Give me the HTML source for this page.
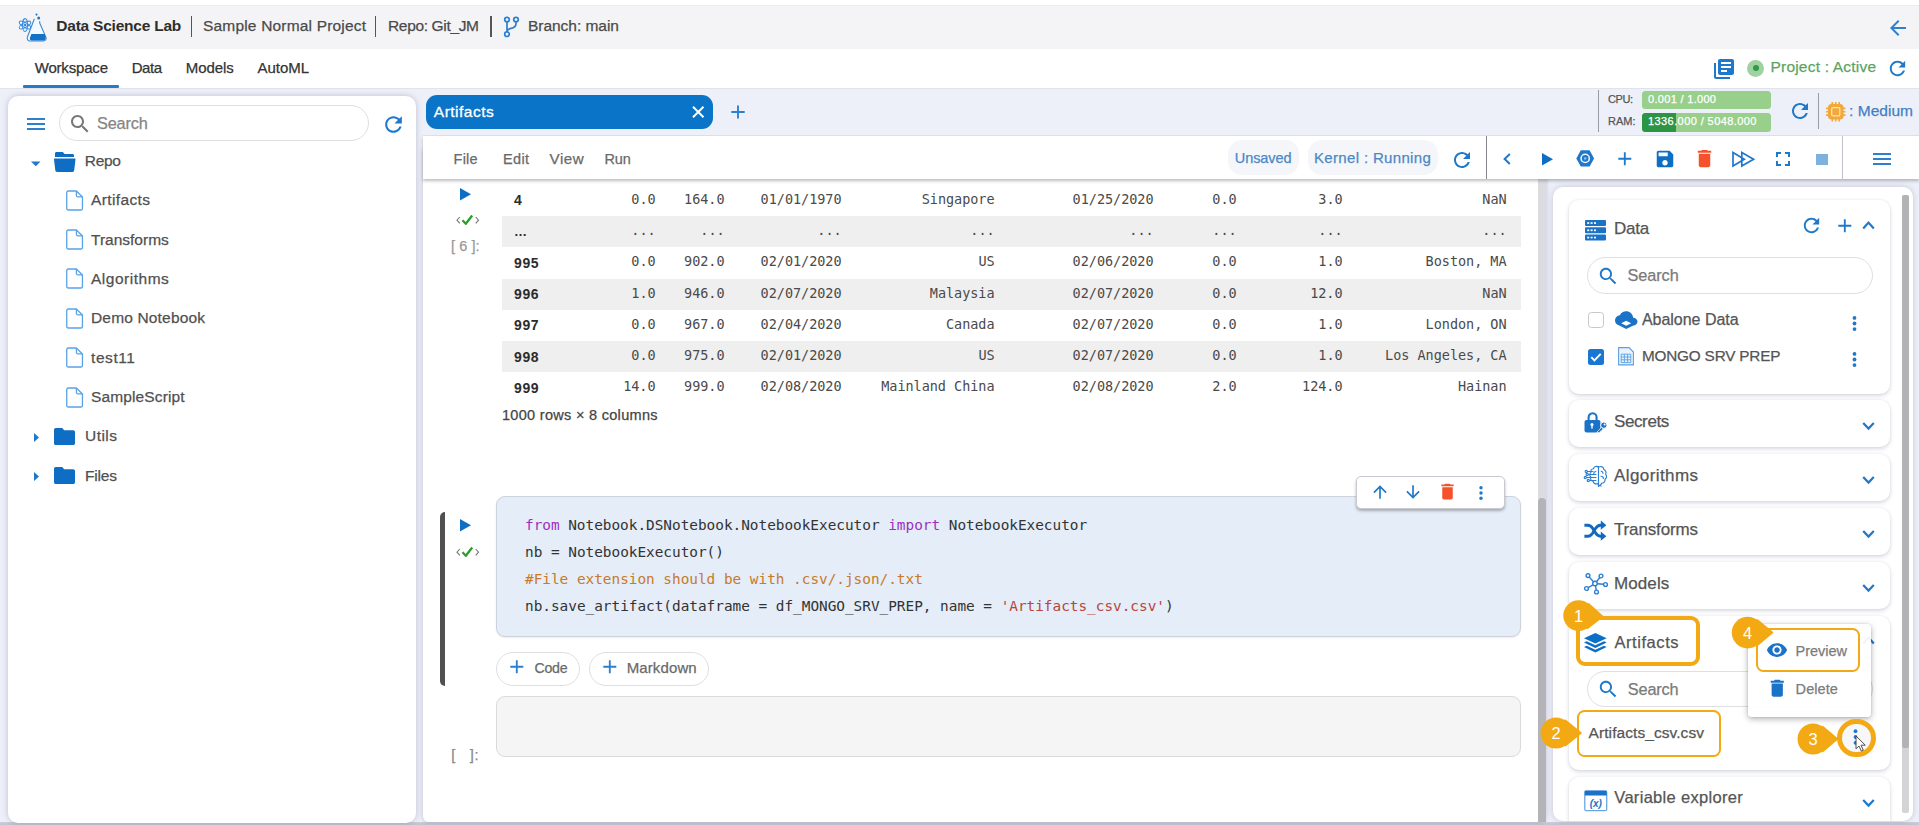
<!DOCTYPE html>
<html lang="en">
<head>
<meta charset="utf-8">
<title>Data Science Lab - Artifacts</title>
<style>
*{box-sizing:border-box;margin:0;padding:0}
html,body{width:1919px;height:825px;overflow:hidden}
body{position:relative;background:#eef0f9;font-family:"Liberation Sans",Arial,sans-serif;color:#444;font-size:15px;line-height:1}
.abs{position:absolute}
.mono,.mono .t{font-family:"DejaVu Sans Mono","Liberation Mono",monospace;-webkit-text-stroke:0}
svg{position:absolute;display:block;overflow:visible}
.ic{fill:#1f78c9}
#hdr{left:0;top:0;width:1919px;height:48.500px;background:#f4f4f6;border-top:5px solid #fff}
#nav{left:0;top:48.500px;width:1919px;height:39.500px;background:#fff}
#left{left:8px;top:96px;width:408px;height:726.800px;background:#fff;border-radius:10px;box-shadow:0 0 6px rgba(70,72,110,.30)}
#tabstrip{left:0;top:88px;width:1919px;height:48px;background:transparent;border-top:1px solid #e1e3ea}
#center{left:423px;top:150px;width:1123px;height:671.600px;background:#fff;border-radius:0 0 6px 6px;box-shadow:0 0 5px rgba(70,72,110,.28)}
#toolbar{left:423px;top:136px;width:1496px;height:43px;background:#fff;box-shadow:0 2px 3px rgba(40,40,50,.30)}
#right{left:1553px;top:186.500px;width:359.500px;height:634.500px;background:#fff;border-radius:10px;box-shadow:0 0 6px rgba(70,72,110,.26)}
.card{position:absolute;left:1569px;width:321px;background:#fff;border-radius:10px;box-shadow:0 2px 4px rgba(80,85,120,.20),0 0 3px rgba(80,85,120,.10)}
.pill{position:absolute;border:1px solid #dfdfe2;border-radius:20px;background:#fff}
.t{position:absolute;white-space:pre;color:#4a4a4a;-webkit-text-stroke:.25px currentColor}
.t.mono,.mono .t{-webkit-text-stroke:0}
</style>
</head>
<body>
<!-- ===== header ===== -->
<header id="hdr" class="abs"></header><div class="abs" style="left:0;top:4.500px;width:1919px;height:1px;background:#ececee"></div>
<nav id="nav" class="abs"></nav>
<div role="banner" aria-label="Application header and navigation">
<!-- logo: flask + atom -->
<svg style="left:18px;top:12px" width="30" height="30" viewBox="0 0 30 30">
  <g fill="none" stroke="#3a8ee0" stroke-width="1.050">
    <ellipse cx="7" cy="13" rx="2.500" ry="6.400"/>
    <ellipse cx="7" cy="13" rx="2.500" ry="6.400" transform="rotate(60 7 13)"/>
    <ellipse cx="7" cy="13" rx="2.500" ry="6.400" transform="rotate(120 7 13)"/>
  </g>
  <circle cx="7" cy="13" r="1.500" fill="#3a8ee0"/>
  <circle cx="18.500" cy="2.600" r="1.050" fill="#1f78c9"/><circle cx="20.700" cy="6.100" r="1.500" fill="#1f78c9"/>
  <path d="M16.200 7.300L9.500 24.800c-.800 2.200.300 4.200 2.600 4.200h13.300c2.200 0 3.300-1.900 2.500-3.900L21.700 11V9.600" fill="#f3f9ff" stroke="#3a87d6" stroke-width="1.100" stroke-linejoin="round" stroke-linecap="round"/>
  <path d="M13.400 21.900h13.100l1 2.900c.600 1.800-.300 3.700-2.300 3.700H13.900c-1.700 0-2.500-1.500-1.900-3.100z" fill="#1172c8"/>
</svg>
<span class="t" style="left:56.30px;top:18.40px;letter-spacing:-0.224px;font-size:15.5px;font-weight:700;color:#2e2e2e;-webkit-text-stroke:0">Data Science Lab</span>
<div class="abs" style="left:190.5px;top:16px;width:1.6px;height:21px;background:#555"></div>
<span class="t" style="left:203.00px;top:18.40px;letter-spacing:0.182px;font-size:15.5px;color:#4a4a4a">Sample Normal Project</span>
<div class="abs" style="left:374.6px;top:16px;width:1.6px;height:21px;background:#555"></div>
<span class="t" style="left:388.00px;top:18.40px;letter-spacing:-0.342px;font-size:15.5px;color:#4a4a4a">Repo: Git_JM</span>
<div class="abs" style="left:490.3px;top:16px;width:1.6px;height:21px;background:#555"></div>
<!-- git branch -->
<svg style="left:503px;top:16px" width="17" height="22" viewBox="0 0 17 22" fill="none" stroke="#2d7fcf" stroke-width="1.7">
  <circle cx="4" cy="3.6" r="2.3"/><circle cx="13" cy="3.6" r="2.3"/><circle cx="4" cy="18.2" r="2.3"/>
  <path d="M4 6v9.8M13 6v1.5c0 3-2.200 4.300-5 4.800-2.200.4-4 1.200-4 3.400"/>
</svg>
<span class="t" style="left:528.00px;top:18.20px;letter-spacing:-0.030px;font-size:15.5px;color:#4a4a4a">Branch: main</span>
<!-- back arrow -->
<svg style="left:1886px;top:16px" width="24" height="24" viewBox="0 0 24 24"><path fill="#2d7fcf" d="M20 11H7.830l5.590-5.590L12 4l-8 8 8 8 1.410-1.410L7.830 13H20v-2z"/></svg>
<!-- nav tabs -->
<span class="t" style="left:34.70px;top:59.50px;letter-spacing:-0.183px;font-size:15px;color:#333">Workspace</span>
<span class="t" style="left:131.70px;top:59.50px;letter-spacing:-0.462px;font-size:15px;color:#333">Data</span>
<span class="t" style="left:185.80px;top:59.50px;letter-spacing:-0.092px;font-size:15px;color:#333">Models</span>
<span class="t" style="left:257.50px;top:59.50px;letter-spacing:-0.041px;font-size:15px;color:#333">AutoML</span>
<div class="abs" style="left:23px;top:85px;width:96px;height:2.500px;background:#2a7ac2;border-radius:1px"></div>
<!-- doc icon -->
<svg style="left:1712px;top:57px" width="24" height="24" viewBox="0 0 24 24"><path fill="#1f78c9" d="M4 6H2v14c0 1.100.900 2 2 2h14v-2H4V6zm16-4H8c-1.100 0-2 .900-2 2v12c0 1.100.900 2 2 2h12c1.100 0 2-.900 2-2V4c0-1.100-.900-2-2-2zm-1 9H9V9h10v2zm-4 4H9v-2h6v2zm4-8H9V5h10v2z"/></svg>
<div class="abs" style="left:1747px;top:59.500px;width:17px;height:17px;border-radius:50%;background:#9fd2a0"></div>
<div class="abs" style="left:1752.500px;top:65px;width:6px;height:6px;border-radius:50%;background:#2f9a4a"></div>
<span class="t" style="left:1770.50px;top:59.40px;letter-spacing:0.199px;font-size:15.5px;color:#5da463">Project : Active</span>
<svg style="left:1886.400px;top:57.100px" width="23" height="23" viewBox="0 0 24 24"><path fill="#1f78c9" d="M17.650 6.350C16.200 4.900 14.210 4 12 4c-4.420 0-7.990 3.580-7.990 8s3.570 8 7.990 8c3.730 0 6.840-2.550 7.730-6h-2.080c-.820 2.330-3.040 4-5.650 4-3.310 0-6-2.690-6-6s2.690-6 6-6c1.660 0 3.140.690 4.220 1.780L13 11h7V4l-2.350 2.350z"/></svg>

</div>
<div class="abs" style="left:0;top:821.600px;width:1919px;height:3.400px;background:linear-gradient(#cfd0dc,#c4c5d2 60%)"></div>
<!-- ===== left panel ===== -->
<aside id="left" class="abs"></aside>
<div role="tree" aria-label="Repository file explorer">
<svg style="left:24px;top:112px" width="24" height="24" viewBox="0 0 24 24"><path fill="#2d7fcf" d="M3 18h18v-2H3v2zm0-5h18v-2H3v2zm0-7v2h18V6H3z"/></svg>
<div class="pill" style="left:58.700px;top:104.500px;width:310px;height:36px"></div>
<svg style="left:67.500px;top:111.500px" width="24" height="24" viewBox="0 0 24 24"><path fill="#777" d="M15.500 14h-.790l-.280-.270C15.410 12.590 16 11.110 16 9.500 16 5.910 13.090 3 9.500 3S3 5.910 3 9.500 5.910 16 9.500 16c1.610 0 3.090-.590 4.230-1.570l.270.280v.790l5 4.990L20.490 19l-4.990-5zm-6 0C7.010 14 5 11.990 5 9.500S7.010 5 9.500 5 14 7.010 14 9.500 11.990 14 9.500 14z"/></svg>
<span class="t" style="left:97.00px;top:114.70px;letter-spacing:-0.179px;font-size:16.300px;color:#858585">Search</span>
<svg style="left:381px;top:112px" width="25" height="25" viewBox="0 0 24 24"><path fill="#1f78c9" d="M17.650 6.350C16.200 4.900 14.210 4 12 4c-4.420 0-7.990 3.580-7.990 8s3.570 8 7.990 8c3.730 0 6.840-2.550 7.730-6h-2.080c-.820 2.330-3.040 4-5.650 4-3.310 0-6-2.690-6-6s2.690-6 6-6c1.660 0 3.140.690 4.220 1.780L13 11h7V4l-2.350 2.350z"/></svg>
<!-- tree -->
<svg style="left:31px;top:160.500px" width="9.500" height="5.500" viewBox="0 0 10 5"><path fill="#1f78c9" d="M0 0h10L5 5z"/></svg>
<svg style="left:54px;top:151.500px" width="21.500" height="20" viewBox="0 0 21.500 20"><path fill="#0d6ec4" d="M2.600 0h6.200l1.800 2h7.800c1 0 1.600.600 1.600 1.500V5H1V1.500C1 .600 1.600 0 2.600 0zM.900 6.500h19.700c.700 0 1 .500.900 1.100l-1.300 10.700c-.100 1-.800 1.700-1.800 1.700H3.100c-1 0-1.700-.700-1.800-1.700L0 7.600c-.100-.600.200-1.100.900-1.100z"/></svg>
<span class="t" style="left:84.80px;top:152.80px;letter-spacing:-0.287px;font-size:15.500px;color:#505050">Repo</span>
<svg style="left:66px;top:189.5px" width="17.200" height="21" viewBox="0 0 18.500 22"><path fill="#fff" stroke="#5aa2e6" stroke-width="1.400" stroke-linejoin="round" d="M2.500 .800h8.700l6.500 6.400v12.300c0 1-.700 1.700-1.700 1.700H2.500c-1 0-1.700-.700-1.700-1.700V2.500c0-1 .700-1.700 1.700-1.700z"/><path fill="none" stroke="#5aa2e6" stroke-width="1.400" stroke-linejoin="round" d="M11.200 .800v4.800c0 1 .600 1.600 1.600 1.600h4.900"/></svg>
<span class="t" style="left:91.00px;top:192.20px;letter-spacing:0.377px;font-size:15.500px;color:#505050">Artifacts</span>
<svg style="left:66px;top:228.9px" width="17.200" height="21" viewBox="0 0 18.500 22"><path fill="#fff" stroke="#5aa2e6" stroke-width="1.400" stroke-linejoin="round" d="M2.500 .800h8.700l6.500 6.400v12.300c0 1-.700 1.700-1.700 1.700H2.500c-1 0-1.700-.700-1.700-1.700V2.500c0-1 .700-1.700 1.700-1.700z"/><path fill="none" stroke="#5aa2e6" stroke-width="1.400" stroke-linejoin="round" d="M11.200 .800v4.800c0 1 .600 1.600 1.600 1.600h4.900"/></svg>
<span class="t" style="left:91.00px;top:231.60px;font-size:15.500px;color:#505050">Transforms</span>
<svg style="left:66px;top:268.3px" width="17.200" height="21" viewBox="0 0 18.500 22"><path fill="#fff" stroke="#5aa2e6" stroke-width="1.400" stroke-linejoin="round" d="M2.500 .800h8.700l6.500 6.400v12.300c0 1-.700 1.700-1.700 1.700H2.500c-1 0-1.700-.700-1.700-1.700V2.500c0-1 .700-1.700 1.700-1.700z"/><path fill="none" stroke="#5aa2e6" stroke-width="1.400" stroke-linejoin="round" d="M11.200 .800v4.800c0 1 .600 1.600 1.600 1.600h4.900"/></svg>
<span class="t" style="left:91.00px;top:271.00px;letter-spacing:0.509px;font-size:15.500px;color:#505050">Algorithms</span>
<svg style="left:66px;top:307.7px" width="17.200" height="21" viewBox="0 0 18.500 22"><path fill="#fff" stroke="#5aa2e6" stroke-width="1.400" stroke-linejoin="round" d="M2.500 .800h8.700l6.500 6.400v12.300c0 1-.700 1.700-1.700 1.700H2.500c-1 0-1.700-.700-1.700-1.700V2.500c0-1 .700-1.700 1.700-1.700z"/><path fill="none" stroke="#5aa2e6" stroke-width="1.400" stroke-linejoin="round" d="M11.200 .800v4.800c0 1 .600 1.600 1.600 1.600h4.900"/></svg>
<span class="t" style="left:91.00px;top:310.40px;letter-spacing:0.165px;font-size:15.500px;color:#505050">Demo Notebook</span>
<svg style="left:66px;top:347.1px" width="17.200" height="21" viewBox="0 0 18.500 22"><path fill="#fff" stroke="#5aa2e6" stroke-width="1.400" stroke-linejoin="round" d="M2.500 .800h8.700l6.500 6.400v12.300c0 1-.700 1.700-1.700 1.700H2.500c-1 0-1.700-.700-1.700-1.700V2.500c0-1 .700-1.700 1.700-1.700z"/><path fill="none" stroke="#5aa2e6" stroke-width="1.400" stroke-linejoin="round" d="M11.200 .800v4.800c0 1 .600 1.600 1.600 1.600h4.900"/></svg>
<span class="t" style="left:91.00px;top:349.80px;letter-spacing:0.584px;font-size:15.500px;color:#505050">test11</span>
<svg style="left:66px;top:386.5px" width="17.200" height="21" viewBox="0 0 18.500 22"><path fill="#fff" stroke="#5aa2e6" stroke-width="1.400" stroke-linejoin="round" d="M2.500 .800h8.700l6.500 6.400v12.300c0 1-.700 1.700-1.700 1.700H2.500c-1 0-1.700-.700-1.700-1.700V2.500c0-1 .700-1.700 1.700-1.700z"/><path fill="none" stroke="#5aa2e6" stroke-width="1.400" stroke-linejoin="round" d="M11.200 .800v4.800c0 1 .600 1.600 1.600 1.600h4.900"/></svg>
<span class="t" style="left:91.00px;top:389.20px;letter-spacing:0.128px;font-size:15.500px;color:#505050">SampleScript</span>
<svg style="left:34px;top:432.9px" width="5" height="9" viewBox="0 0 5 9"><path fill="#1f78c9" d="M0 0l5 4.500L0 9z"/></svg>
<svg style="left:54px;top:427.9px" width="21" height="17" viewBox="0 0 21 17"><path fill="#0d6ec4" d="M1.800 0h6.400l2 2.200h9c1 0 1.800.800 1.800 1.800v11.200c0 1-.800 1.800-1.800 1.800H1.800C.800 17 0 16.200 0 15.200V1.800C0 .800.800 0 1.800 0z"/></svg>
<span class="t" style="left:85.00px;top:428.40px;letter-spacing:0.465px;font-size:15.500px;color:#505050">Utils</span>
<svg style="left:34px;top:472.3px" width="5" height="9" viewBox="0 0 5 9"><path fill="#1f78c9" d="M0 0l5 4.500L0 9z"/></svg>
<svg style="left:54px;top:467.3px" width="21" height="17" viewBox="0 0 21 17"><path fill="#0d6ec4" d="M1.800 0h6.400l2 2.200h9c1 0 1.800.800 1.800 1.800v11.200c0 1-.800 1.800-1.800 1.800H1.800C.800 17 0 16.200 0 15.200V1.800C0 .800.800 0 1.800 0z"/></svg>
<span class="t" style="left:85.00px;top:467.80px;letter-spacing:-0.184px;font-size:15.500px;color:#505050">Files</span>

</div>
<!-- ===== center ===== -->
<div id="tabstrip" class="abs"></div>
<main id="center" class="abs"></main>
<div role="region" aria-label="Notebook cells">
<div class="abs" style="left:1538px;top:179px;width:8px;height:642px;background:#dcdce0"></div>
<div class="abs" style="left:1538px;top:498px;width:8px;height:323.600px;background:#b4b4b8;border-radius:4px 4px 0 0"></div>
<svg style="left:460px;top:188px" width="11" height="12.500" viewBox="0 0 11 12.500"><path fill="#0d6ec4" d="M0 0l11 6.250L0 12.500z"/></svg>
<svg style="left:455.500px;top:213.7px" width="23.500" height="12" viewBox="0 0 23.500 12"><path d="M3.800 3L1 6.200l2.800 3.200M19.700 3l2.800 3.200-2.800 3.200" stroke="#777" stroke-width="1.100" fill="none"/><path d="M6.500 6.300l3.300 3.500 6.400-8.300" stroke="#2aa02a" stroke-width="2.300" fill="none" stroke-linejoin="round"/></svg>
<span class="t" style="left:451.00px;top:238.80px;letter-spacing:0.076px;font-size:14.500px;color:#999">[ 6 ]:</span>
<div class="abs mono" style="left:502px;top:181px;width:1019px;height:222px;font-size:13.500px;color:#484848;overflow:hidden">
<div class="abs" style="left:0;top:3.6px;width:1019px;height:31.3px;"></div>
<div class="abs" style="left:0;top:34.9px;width:1019px;height:31.3px;background:#efefef;"></div>
<div class="abs" style="left:0;top:66.2px;width:1019px;height:31.3px;"></div>
<div class="abs" style="left:0;top:97.5px;width:1019px;height:31.3px;background:#efefef;"></div>
<div class="abs" style="left:0;top:128.8px;width:1019px;height:31.3px;"></div>
<div class="abs" style="left:0;top:160.1px;width:1019px;height:31.3px;background:#efefef;"></div>
<div class="abs" style="left:0;top:191.4px;width:1019px;height:31.3px;"></div>
<span class="t" style="left:12.00px;top:12.10px;font-family:'Liberation Sans',sans-serif;font-weight:700;font-size:14px;color:#2c2c2c;-webkit-text-stroke:0">4</span>
<span class="t" style="left:129.30px;top:11.60px;letter-spacing:-0.045px;">0.0</span><span class="t" style="left:182.10px;top:11.60px;letter-spacing:-0.035px;">164.0</span><span class="t" style="left:258.60px;top:11.60px;letter-spacing:-0.031px;">01/01/1970</span><span class="t" style="left:419.70px;top:11.60px;letter-spacing:-0.032px;">Singapore</span><span class="t" style="left:570.60px;top:11.60px;letter-spacing:-0.031px;">01/25/2020</span><span class="t" style="left:710.30px;top:11.60px;letter-spacing:-0.045px;">0.0</span><span class="t" style="left:816.30px;top:11.60px;letter-spacing:-0.045px;">3.0</span><span class="t" style="left:980.30px;top:11.60px;letter-spacing:-0.045px;">NaN</span>
<span class="t" style="left:12.00px;top:44.40px;font-family:'Liberation Sans',sans-serif;font-weight:700;font-size:13px;color:#2c2c2c;-webkit-text-stroke:0">…</span>
<span class="t" style="left:129.30px;top:42.90px;letter-spacing:-0.045px;">...</span><span class="t" style="left:198.30px;top:42.90px;letter-spacing:-0.045px;">...</span><span class="t" style="left:315.30px;top:42.90px;letter-spacing:-0.045px;">...</span><span class="t" style="left:468.30px;top:42.90px;letter-spacing:-0.045px;">...</span><span class="t" style="left:627.30px;top:42.90px;letter-spacing:-0.045px;">...</span><span class="t" style="left:710.30px;top:42.90px;letter-spacing:-0.045px;">...</span><span class="t" style="left:816.30px;top:42.90px;letter-spacing:-0.045px;">...</span><span class="t" style="left:980.30px;top:42.90px;letter-spacing:-0.045px;">...</span>
<span class="t" style="left:12.00px;top:74.60px;letter-spacing:0.620px;font-family:'Liberation Sans',sans-serif;font-weight:700;font-size:14px;color:#2c2c2c;-webkit-text-stroke:0">995</span>
<span class="t" style="left:129.30px;top:74.10px;letter-spacing:-0.045px;">0.0</span><span class="t" style="left:182.10px;top:74.10px;letter-spacing:-0.035px;">902.0</span><span class="t" style="left:258.60px;top:74.10px;letter-spacing:-0.031px;">02/01/2020</span><span class="t" style="left:476.40px;top:74.10px;letter-spacing:-0.066px;">US</span><span class="t" style="left:570.60px;top:74.10px;letter-spacing:-0.031px;">02/06/2020</span><span class="t" style="left:710.30px;top:74.10px;letter-spacing:-0.045px;">0.0</span><span class="t" style="left:816.30px;top:74.10px;letter-spacing:-0.045px;">1.0</span><span class="t" style="left:923.60px;top:74.10px;letter-spacing:-0.031px;">Boston, MA</span>
<span class="t" style="left:12.00px;top:105.90px;letter-spacing:0.620px;font-family:'Liberation Sans',sans-serif;font-weight:700;font-size:14px;color:#2c2c2c;-webkit-text-stroke:0">996</span>
<span class="t" style="left:129.30px;top:105.50px;letter-spacing:-0.045px;">1.0</span><span class="t" style="left:182.10px;top:105.50px;letter-spacing:-0.035px;">946.0</span><span class="t" style="left:258.60px;top:105.50px;letter-spacing:-0.031px;">02/07/2020</span><span class="t" style="left:427.80px;top:105.50px;letter-spacing:-0.033px;">Malaysia</span><span class="t" style="left:570.60px;top:105.50px;letter-spacing:-0.031px;">02/07/2020</span><span class="t" style="left:710.30px;top:105.50px;letter-spacing:-0.045px;">0.0</span><span class="t" style="left:808.20px;top:105.50px;letter-spacing:-0.039px;">12.0</span><span class="t" style="left:980.30px;top:105.50px;letter-spacing:-0.045px;">NaN</span>
<span class="t" style="left:12.00px;top:137.20px;letter-spacing:0.620px;font-family:'Liberation Sans',sans-serif;font-weight:700;font-size:14px;color:#2c2c2c;-webkit-text-stroke:0">997</span>
<span class="t" style="left:129.30px;top:136.80px;letter-spacing:-0.045px;">0.0</span><span class="t" style="left:182.10px;top:136.80px;letter-spacing:-0.035px;">967.0</span><span class="t" style="left:258.60px;top:136.80px;letter-spacing:-0.031px;">02/04/2020</span><span class="t" style="left:444.00px;top:136.80px;letter-spacing:-0.036px;">Canada</span><span class="t" style="left:570.60px;top:136.80px;letter-spacing:-0.031px;">02/07/2020</span><span class="t" style="left:710.30px;top:136.80px;letter-spacing:-0.045px;">0.0</span><span class="t" style="left:816.30px;top:136.80px;letter-spacing:-0.045px;">1.0</span><span class="t" style="left:923.60px;top:136.80px;letter-spacing:-0.031px;">London, ON</span>
<span class="t" style="left:12.00px;top:168.60px;letter-spacing:0.620px;font-family:'Liberation Sans',sans-serif;font-weight:700;font-size:14px;color:#2c2c2c;-webkit-text-stroke:0">998</span>
<span class="t" style="left:129.30px;top:168.10px;letter-spacing:-0.045px;">0.0</span><span class="t" style="left:182.10px;top:168.10px;letter-spacing:-0.035px;">975.0</span><span class="t" style="left:258.60px;top:168.10px;letter-spacing:-0.031px;">02/01/2020</span><span class="t" style="left:476.40px;top:168.10px;letter-spacing:-0.066px;">US</span><span class="t" style="left:570.60px;top:168.10px;letter-spacing:-0.031px;">02/07/2020</span><span class="t" style="left:710.30px;top:168.10px;letter-spacing:-0.045px;">0.0</span><span class="t" style="left:816.30px;top:168.10px;letter-spacing:-0.045px;">1.0</span><span class="t" style="left:883.10px;top:168.10px;letter-spacing:-0.030px;">Los Angeles, CA</span>
<span class="t" style="left:12.00px;top:199.80px;letter-spacing:0.620px;font-family:'Liberation Sans',sans-serif;font-weight:700;font-size:14px;color:#2c2c2c;-webkit-text-stroke:0">999</span>
<span class="t" style="left:121.20px;top:199.30px;letter-spacing:-0.039px;">14.0</span><span class="t" style="left:182.10px;top:199.30px;letter-spacing:-0.035px;">999.0</span><span class="t" style="left:258.60px;top:199.30px;letter-spacing:-0.031px;">02/08/2020</span><span class="t" style="left:379.20px;top:199.30px;letter-spacing:-0.031px;">Mainland China</span><span class="t" style="left:570.60px;top:199.30px;letter-spacing:-0.031px;">02/08/2020</span><span class="t" style="left:710.30px;top:199.30px;letter-spacing:-0.045px;">2.0</span><span class="t" style="left:800.10px;top:199.30px;letter-spacing:-0.035px;">124.0</span><span class="t" style="left:956.00px;top:199.30px;letter-spacing:-0.036px;">Hainan</span>
</div>
<span class="t" style="left:502.00px;top:408.30px;letter-spacing:0.299px;font-size:14.500px;color:#444">1000 rows × 8 columns</span>
<div class="abs" style="left:440px;top:512px;width:5.400px;height:174px;background:#505050;border-radius:5px 0 0 5px"></div>
<svg style="left:460.300px;top:519px" width="11" height="12.500" viewBox="0 0 11 12.500"><path fill="#0d6ec4" d="M0 0l11 6.250L0 12.500z"/></svg>
<svg style="left:455.500px;top:545.7px" width="23.500" height="12" viewBox="0 0 23.500 12"><path d="M3.800 3L1 6.200l2.800 3.200M19.700 3l2.800 3.200-2.800 3.200" stroke="#777" stroke-width="1.100" fill="none"/><path d="M6.500 6.300l3.300 3.500 6.400-8.300" stroke="#2aa02a" stroke-width="2.300" fill="none" stroke-linejoin="round"/></svg>
<div class="abs" style="left:496px;top:495.500px;width:1025px;height:141px;background:#e4edf8;border:1px solid #ccd3dd;border-radius:9px;box-shadow:0 1px 2px rgba(0,0,0,.08)"></div>
<span class="t mono" style="left:525.00px;top:518.40px;letter-spacing:-0.015px;font-size:14.400px;color:#9b30c0">from</span><span class="t mono" style="left:559.59px;top:518.40px;letter-spacing:-0.016px;font-size:14.400px;color:#333"> Notebook.DSNotebook.NotebookExecutor </span><span class="t mono" style="left:888.22px;top:518.40px;letter-spacing:-0.015px;font-size:14.400px;color:#9b30c0">import</span><span class="t mono" style="left:940.10px;top:518.40px;letter-spacing:-0.016px;font-size:14.400px;color:#333"> NotebookExecutor</span>
<span class="t mono" style="left:525.00px;top:545.40px;letter-spacing:-0.016px;font-size:14.400px;color:#333">nb = NotebookExecutor()</span>
<span class="t mono" style="left:525.00px;top:572.40px;letter-spacing:-0.016px;font-size:14.400px;color:#c77a2a">#File extension should be with .csv/.json/.txt</span>
<span class="t mono" style="left:525.00px;top:599.40px;letter-spacing:-0.016px;font-size:14.400px;color:#333">nb.save_artifact(dataframe = df_MONGO_SRV_PREP, name = </span><span class="t mono" style="left:1000.64px;top:599.40px;letter-spacing:-0.016px;font-size:14.400px;color:#b8453a">'Artifacts_csv.csv'</span><span class="t mono" style="left:1164.95px;top:599.40px;font-size:14.400px;color:#333">)</span>
<div class="abs" style="left:1356px;top:475.500px;width:149px;height:33px;background:#fff;border:1px solid #c9c9cf;border-radius:5px;box-shadow:0 2px 3px rgba(0,0,0,.28)"></div>
<svg style="left:1370px;top:482px" width="20" height="20" viewBox="0 0 24 24"><path fill="#1f78c9" d="M4 12l1.410 1.410L11 7.830V20h2V7.830l5.580 5.590L20 12l-8-8-8 8z"/></svg>
<svg style="left:1403.400px;top:482px" width="20" height="20" viewBox="0 0 24 24"><path fill="#1f78c9" d="M20 12l-1.410-1.410L13 16.170V4h-2v12.170l-5.580-5.590L4 12l8 8 8-8z"/></svg>
<svg style="left:1436.500px;top:481px" width="21" height="21" viewBox="0 0 24 24"><path fill="#f5512c" d="M6 19c0 1.100.900 2 2 2h8c1.100 0 2-.900 2-2V7H6v12zM19 4h-3.500l-1-1h-5l-1 1H5v2h14V4z"/></svg>
<svg style="left:1479px;top:485.500px" width="4" height="14" viewBox="0 0 4 14"><circle cx="2" cy="1.800" r="1.700" fill="#1f78c9"/><circle cx="2" cy="7" r="1.700" fill="#1f78c9"/><circle cx="2" cy="12.200" r="1.700" fill="#1f78c9"/></svg>
<div class="pill" style="left:496px;top:651.500px;width:83.500px;height:34px"></div>
<svg style="left:510.400px;top:660.200px" width="13.600" height="13.600" viewBox="0 0 14 14"><path d="M7 .300v13.400M.300 7h13.400" stroke="#2d7fcf" stroke-width="1.900" fill="none"/></svg>
<span class="t" style="left:534.50px;top:661.00px;letter-spacing:-0.274px;font-size:14.200px;color:#6a6a6a">Code</span>
<div class="pill" style="left:589px;top:651.500px;width:120px;height:34px"></div>
<svg style="left:602.600px;top:660.200px" width="13.600" height="13.600" viewBox="0 0 14 14"><path d="M7 .300v13.400M.300 7h13.400" stroke="#2d7fcf" stroke-width="1.900" fill="none"/></svg>
<span class="t" style="left:626.70px;top:660.00px;letter-spacing:0.114px;font-size:15px;color:#6a6a6a">Markdown</span>
<div class="abs" style="left:496px;top:695.500px;width:1025px;height:61px;background:#f5f5f6;border:1px solid #dadada;border-radius:9px"></div>
<span class="t" style="left:451.30px;top:748.30px;letter-spacing:0.606px;font-size:14.500px;color:#888">[   ]:</span>

</div>
<div id="toolbar" class="abs"></div>
<div role="toolbar" aria-label="Notebook tabs, resources and toolbar">
<div class="abs" style="left:423px;top:135px;width:1496px;height:1px;background:#dddfe6"></div>
<!-- tab -->
<div class="abs" style="left:426px;top:94.500px;width:287px;height:34px;background:#0a74c9;border-radius:11px"></div>
<span class="t" style="left:433.80px;top:103.80px;letter-spacing:0.502px;font-size:15.500px;color:#fff;font-weight:400;-webkit-text-stroke:.3px #fff">Artifacts</span>
<svg style="left:691.500px;top:105.500px" width="12.500" height="12" viewBox="0 0 12.500 12"><path d="M1 .800l10.500 10.400M11.500 .800L1 11.200" stroke="#fff" stroke-width="2" fill="none"/></svg>
<svg style="left:730.500px;top:105.400px" width="14" height="14" viewBox="0 0 14 14"><path d="M7 .500v13M.300 7h13.400" stroke="#2d7fcf" stroke-width="1.900" fill="none"/></svg>
<!-- resource box -->
<div class="abs" style="left:1597.500px;top:90px;width:1px;height:42px;background:#9a9aa8"></div>
<span class="t" style="left:1608.00px;top:93.70px;letter-spacing:-0.427px;font-size:11px;color:#555">CPU:</span>
<span class="t" style="left:1608.00px;top:115.80px;font-size:11px;color:#555">RAM:</span>
<div class="abs" style="left:1641.800px;top:90.500px;width:129.200px;height:18px;background:#97cf8b;border-radius:3.500px"></div>
<div class="abs" style="left:1641.800px;top:112.500px;width:129.200px;height:19px;background:#97cf8b;border-radius:3.500px;overflow:hidden"><div style="width:34.200px;height:19px;background:#2b9545"></div></div>
<span class="t" style="left:1648.00px;top:93.80px;letter-spacing:0.314px;font-size:11px;color:#fff">0.001 / 1.000</span>
<span class="t" style="left:1648.00px;top:116.20px;letter-spacing:0.415px;font-size:11px;color:#fff">1336.000 / 5048.000</span>
<svg style="left:1788px;top:99px" width="24" height="24" viewBox="0 0 24 24"><path fill="#1f78c9" d="M17.650 6.350C16.200 4.900 14.210 4 12 4c-4.420 0-7.990 3.580-7.990 8s3.570 8 7.990 8c3.730 0 6.840-2.550 7.730-6h-2.080c-.820 2.330-3.040 4-5.650 4-3.310 0-6-2.690-6-6s2.690-6 6-6c1.660 0 3.140.690 4.220 1.780L13 11h7V4l-2.350 2.350z"/></svg>
<div class="abs" style="left:1818px;top:92.500px;width:1px;height:36px;background:#9a9aa8"></div>
<svg style="left:1826px;top:101.500px" width="19.500" height="19.500" viewBox="0 0 19.500 19.500"><g stroke="#f3a93a" stroke-width="1.700"><path d="M6.300 0v19.500M9.750 0v19.500M13.200 0v19.500M0 6.300h19.500M0 9.750h19.500M0 13.200h19.500"/></g><rect x="2" y="2" width="15.500" height="15.500" rx="3.500" fill="#f3a93a"/><rect x="5.700" y="5.700" width="8.100" height="8.100" rx="1" fill="#f3a93a" stroke="#fde3a6" stroke-width="1.300"/></svg>
<span class="t" style="left:1849.00px;top:102.90px;letter-spacing:0.036px;font-size:15.500px;color:#3f80c4">: Medium</span>
<!-- menu -->
<span class="t" style="left:453.60px;top:151.80px;letter-spacing:0.208px;font-size:14.500px;color:#6a6a6a">File</span>
<span class="t" style="left:503.00px;top:151.80px;letter-spacing:0.333px;font-size:14.500px;color:#6a6a6a">Edit</span>
<span class="t" style="left:549.60px;top:150.80px;letter-spacing:0.481px;font-size:15.200px;color:#6a6a6a">View</span>
<span class="t" style="left:604.60px;top:151.80px;letter-spacing:-0.205px;font-size:14.500px;color:#6a6a6a">Run</span>
<div class="abs" style="left:1228px;top:140px;width:70.500px;height:35px;border-radius:14px;background:#f5f6f9"></div>
<span class="t" style="left:1234.80px;top:151.00px;letter-spacing:-0.072px;font-size:14.500px;color:#4b88c6">Unsaved</span>
<div class="abs" style="left:1308px;top:140px;width:129.500px;height:35px;border-radius:14px;background:#f5f6f9"></div>
<span class="t" style="left:1314.00px;top:149.60px;letter-spacing:0.337px;font-size:15px;color:#4b88c6">Kernel : Running</span>
<svg style="left:1450px;top:147.500px" width="24" height="24" viewBox="0 0 24 24"><path fill="#1f78c9" d="M17.650 6.350C16.200 4.900 14.210 4 12 4c-4.420 0-7.990 3.580-7.990 8s3.570 8 7.990 8c3.730 0 6.840-2.550 7.730-6h-2.080c-.820 2.330-3.040 4-5.650 4-3.310 0-6-2.690-6-6s2.690-6 6-6c1.660 0 3.140.690 4.220 1.780L13 11h7V4l-2.350 2.350z"/></svg>
<div class="abs" style="left:1486px;top:136px;width:1px;height:43px;background:#85858f"></div>
<svg style="left:1502.700px;top:152.700px" width="8" height="12" viewBox="0 0 8 12"><path d="M6.800 1L1.600 6l5.200 5" stroke="#1f78c9" stroke-width="2" fill="none"/></svg>
<svg style="left:1541.800px;top:152.800px" width="11" height="12.500" viewBox="0 0 11 12.500"><path fill="#0d6ec4" d="M0 0l11 6.250L0 12.500z"/></svg>
<!-- hex settings -->
<svg style="left:1575.800px;top:150.200px" width="18.400" height="16.800" viewBox="0 0 18.400 16.800"><path d="M4.800 .300h8.800l4.500 8.100-4.500 8.100H4.800L.300 8.400z" fill="#1f78c9"/><circle cx="9.200" cy="8.400" r="4.100" fill="none" stroke="#e9f3fc" stroke-width="1.600"/><circle cx="9.200" cy="8.400" r="1.200" fill="#9cc6ee"/></svg>
<svg style="left:1618px;top:152.200px" width="13.600" height="13.600" viewBox="0 0 14 14"><path d="M7 .300v13.400M.300 7h13.400" stroke="#1f78c9" stroke-width="1.900" fill="none"/></svg>
<svg style="left:1653.500px;top:147.500px" width="22" height="22" viewBox="0 0 24 24"><path fill="#0d6ec4" d="M17 3H5c-1.110 0-2 .900-2 2v14c0 1.100.890 2 2 2h14c1.100 0 2-.900 2-2V7l-4-4zm-5 16c-1.660 0-3-1.340-3-3s1.340-3 3-3 3 1.340 3 3-1.340 3-3 3zm3-10H5V5h10v4z"/></svg>
<svg style="left:1692.500px;top:147px" width="23" height="23" viewBox="0 0 24 24"><path fill="#f5512c" d="M6 19c0 1.100.900 2 2 2h8c1.100 0 2-.900 2-2V7H6v12zM19 4h-3.500l-1-1h-5l-1 1H5v2h14V4z"/></svg>
<svg style="left:1731.500px;top:150.500px" width="23" height="16.500" viewBox="0 0 23 16.500"><path d="M1 1.500l11.300 6.750L1 15zM9.800 1.500l11.800 6.750L9.800 15z" fill="none" stroke="#1f78c9" stroke-width="1.700" stroke-linejoin="miter"/></svg>
<svg style="left:1771px;top:147px" width="24" height="24" viewBox="0 0 24 24"><path fill="#1f78c9" d="M7 14H5v5h5v-2H7v-3zm-2-4h2V7h3V5H5v5zm12 7h-3v2h5v-5h-2v3zM14 5v2h3v3h2V5h-5z"/></svg>
<div class="abs" style="left:1816px;top:153.500px;width:12px;height:11px;background:#7fb1de"></div>
<div class="abs" style="left:1841.500px;top:136px;width:1px;height:43px;background:#c2c2c9"></div>
<svg style="left:1869.500px;top:147px" width="24" height="24" viewBox="0 0 24 24"><path fill="#2d7fcf" d="M3 18h18v-2H3v2zm0-5h18v-2H3v2zm0-7v2h18V6H3z"/></svg>

</div>
<!-- ===== right panel ===== -->
<aside id="right" class="abs"></aside>
<div role="complementary" aria-label="Notebook side panel">
<div class="abs" style="left:1902.200px;top:195px;width:6.600px;height:618px;background:#d4d4d7;border-radius:2px"></div>
<div class="abs" style="left:1902.200px;top:195px;width:6.600px;height:553px;background:#b3b3b6;border-radius:2px"></div>
<section class="card" style="top:200px;height:193.500px"></section>
<svg style="left:1584.500px;top:219.500px" width="21" height="20.500" viewBox="0 0 21 20.500"><g fill="#1a73c6"><rect x="0" y="0" width="21" height="6" rx="1"/><rect x="0" y="7.250" width="21" height="6" rx="1"/><rect x="0" y="14.500" width="21" height="6" rx="1"/></g><g fill="#fff"><rect x="2.200" y="2.200" width="2" height="1.700"/><rect x="5.600" y="2.200" width="2" height="1.700"/><rect x="9" y="2.200" width="2" height="1.700"/><rect x="2.200" y="9.450" width="2" height="1.700"/><rect x="5.600" y="9.450" width="2" height="1.700"/><rect x="9" y="9.450" width="2" height="1.700"/><rect x="2.200" y="16.700" width="2" height="1.700"/><rect x="5.600" y="16.700" width="2" height="1.700"/><rect x="9" y="16.700" width="2" height="1.700"/></g></svg>
<span class="t" style="left:1614.00px;top:220.00px;letter-spacing:-0.207px;font-size:17px;color:#555">Data</span>
<svg style="left:1799.700px;top:214.300px" width="23" height="23" viewBox="0 0 24 24"><path fill="#1f78c9" d="M17.650 6.350C16.200 4.900 14.210 4 12 4c-4.420 0-7.990 3.580-7.990 8s3.570 8 7.990 8c3.730 0 6.840-2.550 7.730-6h-2.080c-.820 2.330-3.040 4-5.650 4-3.310 0-6-2.690-6-6s2.690-6 6-6c1.660 0 3.140.690 4.220 1.780L13 11h7V4l-2.350 2.350z"/></svg>
<svg style="left:1837.900px;top:219.200px" width="13.600" height="13.600" viewBox="0 0 14 14"><path d="M7 .300v13.400M.300 7h13.400" stroke="#1f78c9" stroke-width="1.900" fill="none"/></svg>
<svg style="left:1862.0px;top:220.800px" width="13.0" height="8.5" viewBox="0 0 13.0 8.5"><path d="M1.200 7.5L6.5 1.600 11.8 7.5" stroke="#1f78c9" stroke-width="2.200" fill="none"/></svg>
<div class="pill" style="left:1586.500px;top:257.300px;width:286.500px;height:36.600px"></div>
<svg style="left:1597.200px;top:265.200px" width="22.500" height="22.500" viewBox="0 0 24 24"><path fill="#1f78c9" d="M15.500 14h-.790l-.280-.270C15.410 12.590 16 11.110 16 9.500 16 5.910 13.090 3 9.500 3S3 5.910 3 9.500 5.910 16 9.500 16c1.610 0 3.090-.590 4.230-1.570l.270.280v.790l5 4.990L20.490 19l-4.990-5zm-6 0C7.010 14 5 11.990 5 9.500S7.010 5 9.500 5 14 7.010 14 9.500 11.990 14 9.500 14z"/></svg>
<span class="t" style="left:1627.50px;top:266.80px;letter-spacing:-0.079px;font-size:16.300px;color:#7a7a7a">Search</span>
<div class="abs" style="left:1588px;top:312.300px;width:16px;height:16px;border:1.500px solid #c8c8c8;border-radius:3.500px;background:#fff"></div>
<svg style="left:1614.500px;top:310.800px" width="22.500" height="18" viewBox="0 0 22.500 18"><path fill="#1a73c6" d="M18.200 6.700C17.600 3 14.800 .300 11.200 .300 8.400 .300 6 1.900 4.800 4.300 2 4.600 0 6.800 0 9.600c0 2.600 1.800 4.500 4.300 5l6.900 3.300 7.200-3.300c2.300-.200 4.100-2 4.100-4.100 0-2-1.900-3.700-4.300-3.800z"/><path fill="#fff" d="M11.200 9.800l5 2.500-5 2.500-5-2.500z"/></svg>
<span class="t" style="left:1641.90px;top:311.80px;letter-spacing:-0.015px;font-size:16px;color:#555">Abalone Data</span>
<svg style="left:1852.2px;top:315.5px" width="5" height="15.0" viewBox="0 0 5 15.0"><circle cx="2.500" cy="1.9" r="1.9" fill="#1f78c9"/><circle cx="2.500" cy="7.5" r="1.9" fill="#1f78c9"/><circle cx="2.500" cy="13.1" r="1.9" fill="#1f78c9"/></svg>
<div class="abs" style="left:1588px;top:348.500px;width:16px;height:16px;border-radius:2.500px;background:#1976d2"></div>
<svg style="left:1588px;top:348.500px" width="16" height="16" viewBox="0 0 16 16"><path d="M3.300 8.200l3.100 3.100 6.300-6.500" stroke="#fff" stroke-width="1.900" fill="none"/></svg>
<svg style="left:1617.500px;top:347px" width="16" height="18.500" viewBox="0 0 16 18.500"><path d="M.600 .600h10.400l4.400 4.400v12.900H.600z" fill="#eaf3fc" stroke="#5b9fe0" stroke-width="1.100"/><path d="M3.200 7.200h9.600v8.400H3.200zM3.200 10h9.600M3.200 12.800h9.600M6.400 7.200v8.400M9.600 7.200v8.400" fill="none" stroke="#5b9fe0" stroke-width=".900"/></svg>
<span class="t" style="left:1641.90px;top:348.30px;letter-spacing:-0.171px;font-size:15.300px;color:#555">MONGO SRV PREP</span>
<svg style="left:1852.2px;top:351.5px" width="5" height="15.0" viewBox="0 0 5 15.0"><circle cx="2.500" cy="1.9" r="1.9" fill="#1f78c9"/><circle cx="2.500" cy="7.5" r="1.9" fill="#1f78c9"/><circle cx="2.500" cy="13.1" r="1.9" fill="#1f78c9"/></svg>
<section class="card" style="top:399.5px;height:47px"></section>
<span class="t" style="left:1614.00px;top:412.60px;letter-spacing:-0.390px;font-size:17px;color:#555">Secrets</span>
<svg style="left:1862.0px;top:421.5px" width="13.0" height="8.2" viewBox="0 0 13.0 8.2"><path d="M1.200 1L6.5 6.6 11.8 1" stroke="#1f78c9" stroke-width="2.200" fill="none"/></svg>
<section class="card" style="top:453.5px;height:47px"></section>
<span class="t" style="left:1614.00px;top:466.60px;letter-spacing:0.410px;font-size:17px;color:#555">Algorithms</span>
<svg style="left:1862.0px;top:475.5px" width="13.0" height="8.2" viewBox="0 0 13.0 8.2"><path d="M1.200 1L6.5 6.6 11.8 1" stroke="#1f78c9" stroke-width="2.200" fill="none"/></svg>
<section class="card" style="top:507.5px;height:47px"></section>
<span class="t" style="left:1614.00px;top:520.60px;letter-spacing:-0.148px;font-size:17px;color:#555">Transforms</span>
<svg style="left:1862.0px;top:529.5px" width="13.0" height="8.2" viewBox="0 0 13.0 8.2"><path d="M1.200 1L6.5 6.6 11.8 1" stroke="#1f78c9" stroke-width="2.200" fill="none"/></svg>
<section class="card" style="top:561.5px;height:47px"></section>
<span class="t" style="left:1614.00px;top:574.60px;letter-spacing:0.097px;font-size:17px;color:#555">Models</span>
<svg style="left:1862.0px;top:583.5px" width="13.0" height="8.2" viewBox="0 0 13.0 8.2"><path d="M1.200 1L6.5 6.6 11.8 1" stroke="#1f78c9" stroke-width="2.200" fill="none"/></svg>
<svg style="left:1583.500px;top:411.500px" width="23.500" height="21" viewBox="0 0 23.500 21"><path d="M4.600 8.500V5.600c0-2.400 1.600-4.300 4-4.300s4 1.900 4 4.300v2.900" fill="none" stroke="#1a73c6" stroke-width="2.100"/><rect x=".500" y="8" width="16" height="12.500" rx="2" fill="#1a73c6"/><circle cx="8" cy="12.500" r="1.500" fill="#fff"/><rect x="7.300" y="12.800" width="1.400" height="3.800" fill="#fff"/><circle cx="19.800" cy="13.200" r="3.200" fill="#1a73c6" stroke="#fff" stroke-width="1"/><circle cx="20.600" cy="12.500" r="1" fill="#fff"/><path d="M17.600 15.200l-5 5.300h3l1-1.400 1 .100.300-1.300 1.500-.700z" fill="#1a73c6" stroke="#fff" stroke-width=".700"/></svg>
<svg style="left:1583.500px;top:465px" width="23.500" height="23" viewBox="0 0 23.500 23" fill="none" stroke="#2d7fcf" stroke-width="1.150" stroke-linecap="round"><path d="M14.500 2.200c-1.800-1.600-4.600-.700-5.100 1.500-2 .200-3.100 2-2.500 3.700-1.500 1.300-1.400 3.400-.100 4.600-.800 1.900.300 3.800 2.200 4.200.400 2.300 2.900 3.400 5 2.300.300 1.400 1.600 2.500 3.200 2.500"/><path d="M14.500 1.500v20M14.500 2.200c2.300-1.500 5.200-.200 5.400 2.300 1.900.800 2.700 2.900 1.700 4.700 1.400 1.600 1.200 3.900-.500 5.100.200 2.200-1.400 3.900-3.500 3.900-.500 1.700-1.700 2.800-3.100 2.800"/><path d="M17.200 6.200c1.100.200 1.800 1 1.800 2.100M17 11.200c1.400 0 2.400 1 2.400 2.300M11.800 6.500c-1.200.100-2 .900-2.100 2.100"/><path d="M12 9.500H4.500M12 12.500H2.500M12 15.500H5.500M9 6.500H3.500"/><circle cx="3.200" cy="9.500" r="1.100"/><circle cx="1.300" cy="12.500" r="1.100"/><circle cx="4.300" cy="15.500" r="1.100"/><circle cx="2.300" cy="6.500" r="1.100"/></svg>
<svg style="left:1584px;top:520.300px" width="22.600" height="21.400" viewBox="0 0 22.600 21.400"><g fill="none" stroke="#1269c0" stroke-width="2.900"><path d="M.400 5.200h3.400c2.300 0 3.500 1 4.800 3l2.700 4.400c1.400 2.200 2.700 3.600 5 3.600h1.700"/><path d="M.400 16.200h3.400c2.300 0 3.500-1 4.800-3l2.700-4.400c1.400-2.200 2.700-3.600 5-3.600h1.700"/></g><path fill="#1269c0" d="M16.800 .600l5.600 4.600-5.600 4.600zM16.800 11.600l5.600 4.600-5.600 4.600z"/></svg>
<svg style="left:1583.500px;top:573px" width="24" height="21.500" viewBox="0 0 24 21.500" fill="none" stroke="#2d7fcf" stroke-width="1.400"><circle cx="11" cy="10.500" r="2.300"/><circle cx="4" cy="2.600" r="1.900"/><circle cx="17" cy="3" r="1.900"/><circle cx="21.500" cy="11.500" r="1.900"/><circle cx="12.500" cy="19" r="1.900"/><circle cx="2.500" cy="15.500" r="1.900"/><path d="M5.300 4.100l4.200 4.700M15.800 4.500l-3.400 4.200M13.300 10.800l6.300.500M11.500 12.800l.700 4.300M9 11.800l-4.800 2.800"/></svg>
<section class="card" style="top:615.500px;height:154px"></section>
<svg style="left:1584.300px;top:633px" width="22.700" height="19.700" viewBox="0 0 22.700 19.700"><path fill="#0b6fc7" d="M11.350 0L22.700 5.300 11.350 10.600 0 5.300z"/><path fill="#0b6fc7" d="M2.700 8.300l8.650 4 8.650-4 2.700 1.300-11.350 5.300L0 9.600z"/><path fill="#0b6fc7" d="M2.700 12.800l8.650 4 8.650-4 2.700 1.300-11.350 5.300L0 14.100z"/></svg>
<span class="t" style="left:1614.40px;top:633.70px;letter-spacing:0.574px;font-size:16.500px;color:#555">Artifacts</span>
<svg style="left:1833px;top:627px" width="24" height="24" viewBox="0 0 24 24" opacity=".18"><path fill="#1f78c9" d="M17.650 6.350C16.200 4.900 14.210 4 12 4c-4.420 0-7.990 3.580-7.990 8s3.570 8 7.990 8c3.730 0 6.840-2.550 7.730-6h-2.080c-.820 2.330-3.040 4-5.650 4-3.310 0-6-2.690-6-6s2.690-6 6-6c1.660 0 3.140.690 4.220 1.780L13 11h7V4l-2.350 2.350z"/></svg>
<svg style="left:1862.0px;top:636.0px" width="13.0" height="8.5" viewBox="0 0 13.0 8.5"><path d="M1.200 7.5L6.5 1.600 11.8 7.5" stroke="#1f78c9" stroke-width="2.200" fill="none"/></svg>
<div class="pill" style="left:1587px;top:670.800px;width:286px;height:36px"></div>
<svg style="left:1597.200px;top:677.700px" width="22.500" height="22.500" viewBox="0 0 24 24"><path fill="#1f78c9" d="M15.500 14h-.790l-.280-.270C15.410 12.590 16 11.110 16 9.500 16 5.910 13.090 3 9.500 3S3 5.910 3 9.500 5.910 16 9.500 16c1.610 0 3.090-.590 4.230-1.570l.270.280v.790l5 4.990L20.490 19l-4.990-5zm-6 0C7.010 14 5 11.990 5 9.500S7.010 5 9.500 5 14 7.010 14 9.500 11.990 14 9.500 14z"/></svg>
<span class="t" style="left:1627.80px;top:680.60px;letter-spacing:-0.159px;font-size:16.300px;color:#7a7a7a">Search</span>
<span class="t" style="left:1588.60px;top:725.30px;letter-spacing:0.071px;font-size:15.500px;color:#555">Artifacts_csv.csv</span>
<section class="card" style="top:776.500px;height:44.500px;border-radius:10px 10px 0 0;clip-path:inset(-8px -8px 0 -8px)"></section>
<svg style="left:1583.500px;top:789.500px" width="23.500" height="21.500" viewBox="0 0 23.500 21.500"><rect x=".800" y=".800" width="21.900" height="19.900" rx="1.500" fill="#fff" stroke="#6aa6e2" stroke-width="1.300"/><rect x=".800" y=".800" width="21.900" height="4.700" fill="#1a73c6"/><text x="11.750" y="16.500" font-family="Liberation Sans,sans-serif" font-style="italic" font-weight="700" font-size="10" text-anchor="middle" fill="#1a73c6">(x)</text></svg>
<span class="t" style="left:1614.30px;top:789.40px;letter-spacing:0.305px;font-size:16.500px;color:#555">Variable explorer</span>
<svg style="left:1862.0px;top:798.5px" width="13.0" height="8.2" viewBox="0 0 13.0 8.2"><path d="M1.200 1L6.5 6.6 11.8 1" stroke="#1f78c9" stroke-width="2.200" fill="none"/></svg>
<div class="abs" style="left:1747.500px;top:623.500px;width:123.700px;height:93.500px;background:rgba(255,255,255,.93);border-radius:4px;box-shadow:0 2px 6px rgba(0,0,0,.30),0 0 2px rgba(0,0,0,.15)"></div>
<svg style="left:1765.500px;top:639px" width="22" height="22" viewBox="0 0 24 24"><path fill="#1a73c6" d="M12 4.500C7 4.500 2.730 7.610 1 12c1.730 4.390 6 7.500 11 7.500s9.270-3.110 11-7.500c-1.730-4.390-6-7.500-11-7.500zM12 17c-2.760 0-5-2.240-5-5s2.240-5 5-5 5 2.240 5 5-2.240 5-5 5zm0-8c-1.660 0-3 1.340-3 3s1.340 3 3 3 3-1.340 3-3-1.340-3-3-3z"/></svg>
<span class="t" style="left:1795.60px;top:644.00px;letter-spacing:-0.030px;font-size:14.500px;color:#7b7b7b">Preview</span>
<svg style="left:1765.500px;top:677px" width="22.500" height="22.500" viewBox="0 0 24 24"><path fill="#1a73c6" d="M6 19c0 1.100.900 2 2 2h8c1.100 0 2-.900 2-2V7H6v12zM19 4h-3.500l-1-1h-5l-1 1H5v2h14V4z"/></svg>
<span class="t" style="left:1795.60px;top:682.00px;letter-spacing:0.076px;font-size:14.500px;color:#7b7b7b">Delete</span>
<div class="abs" style="left:1576px;top:616.100px;width:124px;height:49.800px;border:4.200px solid #f3a913;border-radius:9px"></div>
<div class="abs" style="left:1576.800px;top:710px;width:144.200px;height:46.800px;border:2.500px solid #f3a913;border-radius:7.500px"></div>
<div class="abs" style="left:1755.900px;top:628.400px;width:104.100px;height:43.300px;border:2.500px solid #f3a913;border-radius:7.500px"></div>
<div class="abs" style="left:1837.300px;top:718.600px;width:38.400px;height:38.400px;border:5.400px solid #f3a913;border-radius:50%;background:#f7f7f9"></div>
<svg style="left:1852.800px;top:729px" width="5" height="17" viewBox="0 0 5 17"><circle cx="2.500" cy="2.200" r="1.900" fill="#1f78c9"/><circle cx="2.500" cy="8" r="1.900" fill="#1f78c9"/><circle cx="2.500" cy="13.800" r="1.900" fill="#1f78c9"/></svg>
<svg style="left:1854.800px;top:735.300px" width="13" height="18" viewBox="0 0 13 18" opacity=".92"><path d="M1 1v12.800l3-2.800 2.300 5 2-.900-2.300-4.900h4.300z" fill="#fff" stroke="#444" stroke-width="1" stroke-linejoin="round"/></svg>
<svg style="left:1547.9px;top:584.5px" width="61.2" height="61.2" viewBox="0 0 61.2 61.2"><circle cx="30.6" cy="30.6" r="15.3" fill="#f3a913"/><path d="M40.5 18.9L54.4 31.5 39.6 43.0z" fill="#f3a913" stroke="#f3a913" stroke-width="2" stroke-linejoin="round"/><text x="30.6" y="36.6" font-family="Liberation Sans,sans-serif" font-size="16.500" text-anchor="middle" fill="#fff">1</text></svg>
<svg style="left:1525.0px;top:701.7px" width="62.0" height="62.0" viewBox="0 0 62.0 62.0"><circle cx="31.0" cy="31.0" r="15.5" fill="#f3a913"/><path d="M40.3 18.6L55.7 31.0 40.3 43.4z" fill="#f3a913" stroke="#f3a913" stroke-width="2" stroke-linejoin="round"/><text x="31.0" y="37.0" font-family="Liberation Sans,sans-serif" font-size="16.500" text-anchor="middle" fill="#fff">2</text></svg>
<svg style="left:1782.0px;top:708.0px" width="62.0" height="62.0" viewBox="0 0 62.0 62.0"><circle cx="31.0" cy="31.0" r="15.5" fill="#f3a913"/><path d="M40.6 18.8L55.1 31.0 40.6 43.2z" fill="#f3a913" stroke="#f3a913" stroke-width="2" stroke-linejoin="round"/><text x="31.0" y="37.0" font-family="Liberation Sans,sans-serif" font-size="16.500" text-anchor="middle" fill="#fff">3</text></svg>
<svg style="left:1716.4px;top:601.2px" width="63.2" height="63.2" viewBox="0 0 63.2 63.2"><circle cx="31.6" cy="31.6" r="15.8" fill="#f3a913"/><path d="M41.4 19.2L56.2 31.6 41.4 44.0z" fill="#f3a913" stroke="#f3a913" stroke-width="2" stroke-linejoin="round"/><text x="31.6" y="37.6" font-family="Liberation Sans,sans-serif" font-size="16.500" text-anchor="middle" fill="#fff">4</text></svg>

</div>
</body>
</html>
